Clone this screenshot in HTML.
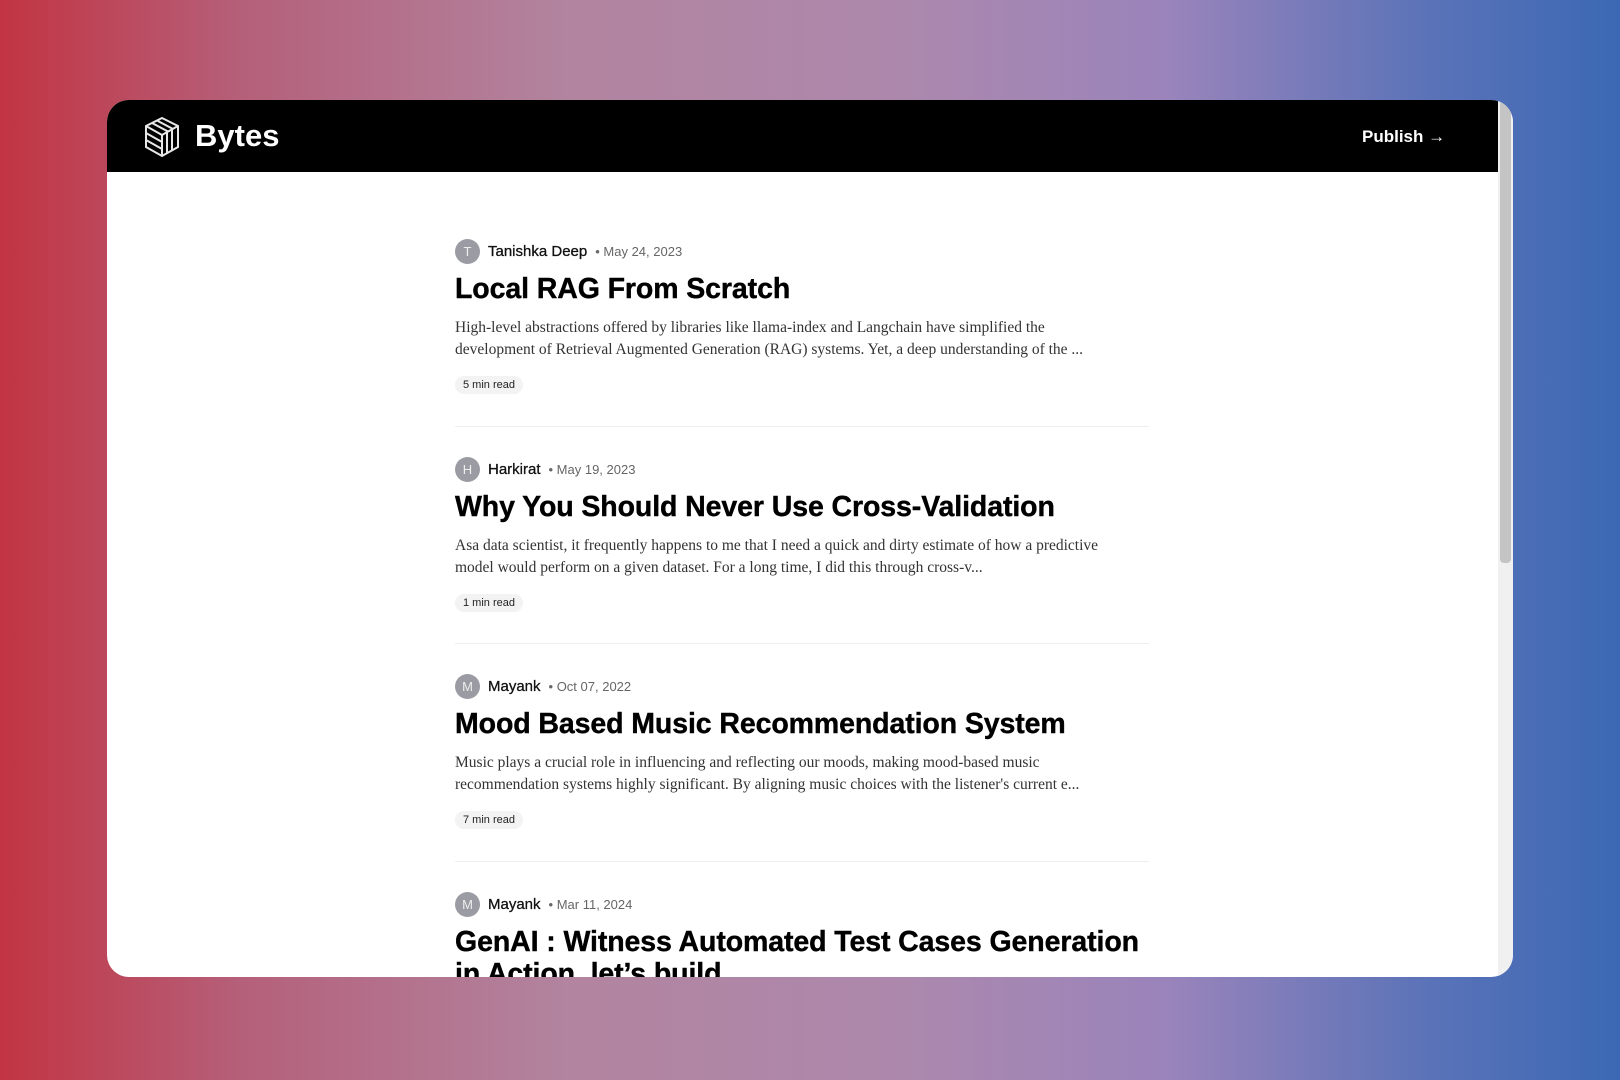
<!DOCTYPE html>
<html><head><meta charset="utf-8"><style>
*{margin:0;padding:0;box-sizing:border-box}
html,body{width:1620px;height:1080px;overflow:hidden}
body{background:linear-gradient(90deg,#c23442 0%,#b5607a 15%,#b2849f 35%,#ad88ac 55%,#9a84bb 72%,#5b73b8 88%,#3b68b4 100%);font-family:"Liberation Sans",sans-serif;position:relative}
.card{position:absolute;left:107px;top:100px;width:1406px;height:877px;background:#fff;border-radius:22px;overflow:hidden}
.hdr{position:absolute;left:0;top:0;width:1391px;height:72px;background:#000}
.sb{position:absolute;left:1391px;top:0;width:15px;height:877px;background:#f0f0f0}
.thumb{position:absolute;left:1393px;top:0;width:11px;height:463px;background:#c4c4c4;border-radius:0 0 4px 4px}
.logo{position:absolute;left:36px;top:16px}
.brand{position:absolute;left:88px;top:18px;color:#fff;font-weight:bold;font-size:31px;letter-spacing:0px}
.pub{position:absolute;left:1255px;top:27px;color:#fff;font-size:17px;font-weight:bold}
.post{position:absolute;left:348px;width:700px}
.meta{display:flex;align-items:center;height:25px}
.av{width:25px;height:25px;border-radius:50%;background:#9b9ba3;color:#eee;font-size:13px;display:flex;align-items:center;justify-content:center;margin-right:8px}
.nm{font-size:15px;color:#111;-webkit-text-stroke:0.3px #111}
.dt{font-size:13px;color:#666;margin-left:8px}
h2{font-size:28.5px;letter-spacing:-0.1px;font-weight:bold;color:#000;margin-top:9px;line-height:32px;-webkit-text-stroke:0.4px #000}
p{font-family:"Liberation Serif",serif;font-size:15.5px;line-height:22px;color:#333;margin-top:12px;width:665px}
.pill{display:inline-block;margin-top:15px;background:#f3f3f3;border-radius:10px;font-size:11px;padding:3px 8px;color:#222}
.div{position:absolute;left:348px;width:694px;height:1px;background:#eee}
</style></head><body>
<div class="card">
<div class="hdr">
<svg class="logo" width="38" height="42" viewBox="0 0 38 42" fill="none" stroke="#e8e8e8" stroke-width="2">
<path d="M19 2 L35 10 L35 31 L19 40 L3 31 L3 10 Z"/><path d="M3 10 L19 19 L35 10"/><path d="M19 19 L19 40"/>
<path d="M3 17 L19 26 M3 24 L19 33"/><path d="M24 16.5 L24 37.5 M29 13.5 L29 34.5"/>
<path d="M9 7 L25 15.5 M14 4.5 L30 13"/>
</svg>
<div class="brand">Bytes</div>
<div class="pub">Publish →</div>
</div>
<div class="sb"></div><div class="thumb"></div>

<div class="post" style="top:139px">
<div class="meta"><div class="av">T</div><span class="nm">Tanishka Deep</span><span class="dt">• May 24, 2023</span></div>
<h2>Local RAG From Scratch</h2>
<p>High-level abstractions offered by libraries like llama-index and Langchain have simplified the development of Retrieval Augmented Generation (RAG) systems. Yet, a deep understanding of the ...</p>
<span class="pill">5 min read</span>
</div>
<div class="div" style="top:326px"></div>

<div class="post" style="top:357px">
<div class="meta"><div class="av">H</div><span class="nm">Harkirat</span><span class="dt">• May 19, 2023</span></div>
<h2>Why You Should Never Use Cross-Validation</h2>
<p>Asa data scientist, it frequently happens to me that I need a quick and dirty estimate of how a predictive model would perform on a given dataset. For a long time, I did this through cross-v...</p>
<span class="pill">1 min read</span>
</div>
<div class="div" style="top:543px"></div>

<div class="post" style="top:574px">
<div class="meta"><div class="av">M</div><span class="nm">Mayank</span><span class="dt">• Oct 07, 2022</span></div>
<h2>Mood Based Music Recommendation System</h2>
<p>Music plays a crucial role in influencing and reflecting our moods, making mood-based music recommendation systems highly significant. By aligning music choices with the listener's current e...</p>
<span class="pill">7 min read</span>
</div>
<div class="div" style="top:761px"></div>

<div class="post" style="top:792px">
<div class="meta"><div class="av">M</div><span class="nm">Mayank</span><span class="dt">• Mar 11, 2024</span></div>
<h2>GenAI : Witness Automated Test Cases Generation in Action, let’s build</h2>
</div>
</div>
</body></html>
